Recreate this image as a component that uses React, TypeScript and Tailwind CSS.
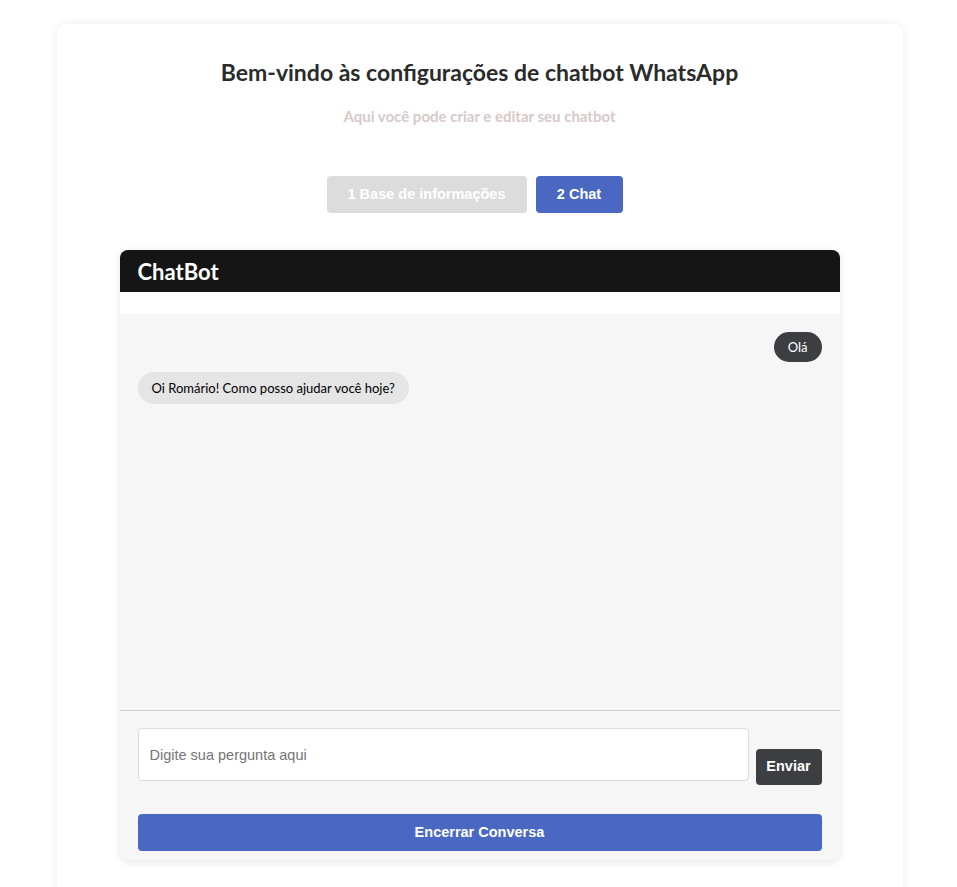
import { useState } from 'react'

// Tela de configuração do chatbot - passo 2 (Chat)
type Msg = { from: 'user' | 'bot'; text: string }

export default function App() {
  const [messages] = useState<Msg[]>([
    { from: 'user', text: 'Olá' },
    { from: 'bot', text: 'Oi Romário! Como posso ajudar você hoje?' },
  ])
  const [input, setInput] = useState('')

  const segoe = { fontFamily: 'Lato, "Noto Sans", sans-serif' }

  return (
    <div className="min-h-screen bg-white pt-6 pl-[2px] font-['Liberation_Sans',Arial,sans-serif]">
      <div className="mx-auto w-[846px] rounded-lg bg-white pb-10 shadow-[0_0_10px_rgba(0,0,0,0.08)]">
        <h1
          style={segoe}
          className="pt-[34px] text-center text-[23px] font-bold leading-[28px] text-[#2b2b2b]"
        >
          Bem-vindo às configurações de chatbot WhatsApp
        </h1>
        <p
          style={segoe}
          className="mt-[21px] text-center text-[15px] font-bold leading-[19px] text-[#d8c9c9]"
        >
          Aqui você pode criar e editar seu chatbot
        </p>

        {/* passos */}
        <div className="mt-[50px] flex justify-center gap-[9px] pr-[10px]">
          <button className="h-[37px] w-[200px] rounded bg-[#dcdcdc] text-[14.5px] font-bold text-white">
            1 Base de informações
          </button>
          <button className="h-[37px] w-[87px] rounded bg-[#4a68c2] text-[14.5px] font-bold text-white">
            2 Chat
          </button>
        </div>

        {/* chat */}
        <div className="mx-auto mt-[37px] w-[720px] overflow-hidden rounded-lg bg-[#f6f6f6] shadow-[0_2px_8px_rgba(0,0,0,0.1)]">
          <div className="flex h-[42px] items-center bg-[#151515] px-[18px]">
            <h2 style={segoe} className="text-[22px] font-bold text-white">
              ChatBot
            </h2>
          </div>
          <div className="h-[22px] bg-white"></div>

          <div className="flex h-[396px] flex-col gap-[10px] px-[18px] pt-[18px]">
            {messages.map((m, i) =>
              m.from === 'user' ? (
                <div key={i} className="flex justify-end">
                  <span
                    style={segoe}
                    className="rounded-full bg-[#3d3e42] px-[14px] py-[5px] text-[13px] leading-[20px] text-white"
                  >
                    {m.text}
                  </span>
                </div>
              ) : (
                <div key={i} className="flex justify-start">
                  <span
                    style={segoe}
                    className="rounded-full bg-[#e5e5e5] px-[14px] py-[6px] text-[13px] leading-[20px] text-black"
                  >
                    {m.text}
                  </span>
                </div>
              )
            )}
          </div>

          <div className="border-t border-[#cccccc] px-[18px] pt-[17px] pb-[9px]">
            <div className="flex items-end gap-[7px]">
              <input
                value={input}
                onChange={e => setInput(e.target.value)}
                placeholder="Digite sua pergunta aqui"
                className="h-[53px] flex-1 rounded border border-[#dddddd] bg-white px-[11px] text-[14.5px] text-[#333] placeholder:text-[#757575] outline-none"
              />
              <button className="mb-[-4px] h-[36px] w-[66px] rounded bg-[#3d3e42] text-[14.5px] font-bold text-white">
                Enviar
              </button>
            </div>
            <button className="mt-[33px] h-[37px] w-full rounded bg-[#4a68c2] text-[14.5px] font-bold text-white">
              Encerrar Conversa
            </button>
          </div>
        </div>
      </div>
    </div>
  )
}
